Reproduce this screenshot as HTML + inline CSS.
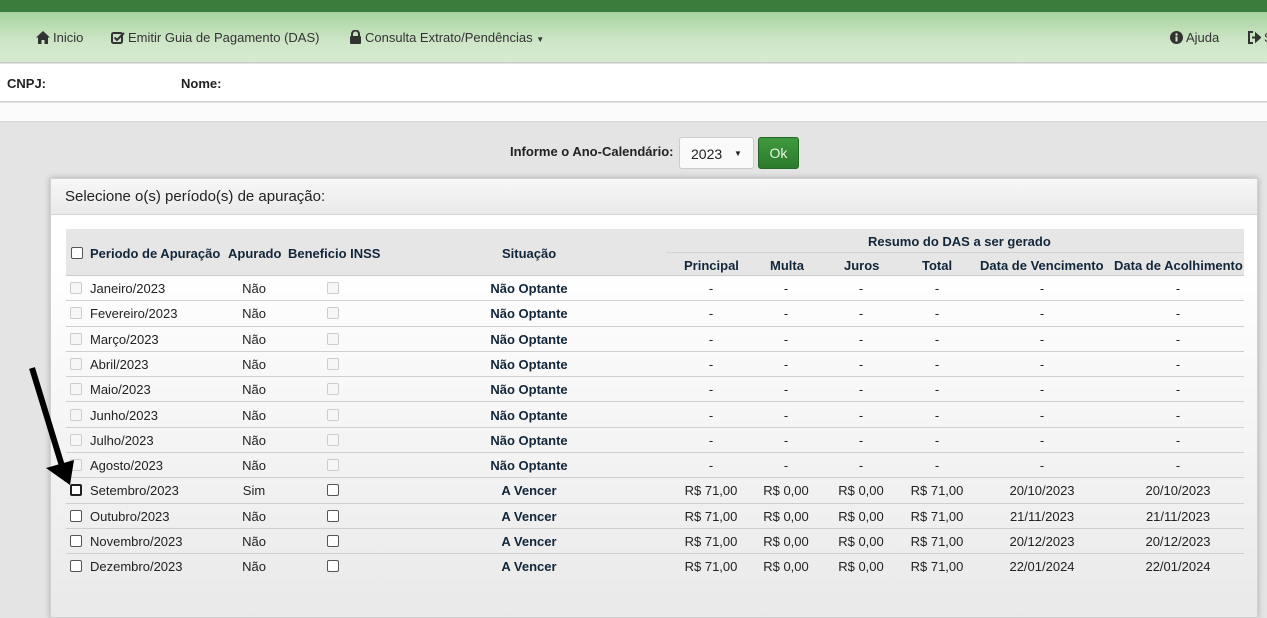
<!DOCTYPE html>
<html><head><meta charset="utf-8"><style>
*{margin:0;padding:0;box-sizing:border-box}
body{width:1267px;height:616px;overflow:hidden;background:#e4e4e4;font-family:"Liberation Sans",sans-serif;font-size:13px;color:#222;position:relative}
.abs{position:absolute}
#top{left:0;top:0;width:1267px;height:12px;background:#3b7b3b}
#nav{left:0;top:12px;width:1267px;height:51px;background:linear-gradient(#a8d4a0,#cfe6c8 60%,#d6ead0);border-bottom:1px solid #c8c8c8}
.ni{position:absolute;top:18px;font-size:13px;color:#333;white-space:nowrap}
.ni svg{vertical-align:-2px;margin-right:3px}
#info{left:0;top:64px;width:1267px;height:38px;background:#fff;border-bottom:1px solid #ccc}
#info2{left:0;top:103px;width:1267px;height:19px;background:#fbfbfb;border-bottom:1px solid #d8d8d8}
#panel{left:50px;top:178px;width:1208px;height:440px;background:linear-gradient(#fff 20%,#f4f4f4 60%,#e9e9e9);box-shadow:0 0 6px rgba(0,0,0,.25);border:1px solid #d0d0d0}
#ph{left:0;top:0;width:1206px;height:36px;background:linear-gradient(#f7f7f7,#e9e9e9);border-bottom:1px solid #d5d5d5;font-size:15px;padding:9px 14px;color:#222}
#th{left:66px;top:229px;width:1178px;height:47px;background:#e6e6e6;border-bottom:1px solid #ccc}
.h{position:absolute;font-weight:bold;color:#12263a;font-size:13px;white-space:nowrap}
.row{position:absolute;left:66px;width:1178px;height:25.3px;border-bottom:1px solid #cfcfcf}
.c{position:absolute;top:5px;white-space:nowrap;transform:translateX(-50%)}
.cb{position:absolute;width:12px;height:12px;border:1px solid #ccc;border-radius:2px;background:#f6f6f6}
.cb.on{border-color:#555;background:#fff}
.s{font-weight:bold;color:#12263a}
</style></head><body>
<div id="top" class="abs"></div>
<div id="nav" class="abs">
<span class="ni" style="left:36px"><svg width="14" height="13" viewBox="0 0 14 13"><path d="M7 0L0 6.5h2V13h3.5V9h3v4H12V6.5h2z" fill="#333"/></svg>Inicio</span>
<span class="ni" style="left:111px"><svg width="14" height="13" viewBox="0 0 14 13"><rect x="1" y="2" width="10" height="10" rx="1.5" fill="none" stroke="#333" stroke-width="2"/><path d="M3.5 6.5l2.5 2.5 7-7" fill="none" stroke="#333" stroke-width="2"/></svg>Emitir Guia de Pagamento (DAS)</span>
<span class="ni" style="left:349px"><svg width="13" height="14" viewBox="0 0 13 14"><path d="M3 6V4a3.5 3.5 0 017 0v2" fill="none" stroke="#333" stroke-width="2"/><rect x="1" y="6" width="11" height="8" rx="1" fill="#333"/></svg>Consulta Extrato/Pendências <span style="font-size:8px">&#9660;</span></span>
<span class="ni" style="left:1170px"><svg width="13" height="13" viewBox="0 0 13 13"><circle cx="6.5" cy="6.5" r="6.5" fill="#333"/><rect x="5.5" y="5.5" width="2" height="5" fill="#d2e8cc"/><circle cx="6.5" cy="3.5" r="1.2" fill="#d2e8cc"/></svg>Ajuda</span>
<span class="ni" style="left:1247px"><svg width="14" height="13" viewBox="0 0 14 13"><path d="M6 1H2v11h4" fill="none" stroke="#333" stroke-width="2"/><path d="M5 6.5h5M9 3l4 3.5L9 10z" fill="#333" stroke="#333" stroke-width="2"/></svg>S</span>
</div>
<div id="info" class="abs"><b class="abs" style="left:7px;top:12px">CNPJ:</b><b class="abs" style="left:181px;top:12px">Nome:</b></div>
<div id="info2" class="abs"></div>
<b class="abs" style="left:510px;top:144px;font-size:13px">Informe o Ano-Calendário:</b>
<div class="abs" style="left:679px;top:137px;width:75px;height:32px;background:#fafafa;border:1px solid #ccc;border-radius:3px;font-size:14px;padding:8px 11px;white-space:nowrap">2023<span style="font-size:8px;position:absolute;left:54px;top:11px">&#9660;</span></div>
<div class="abs" style="left:758px;top:137px;width:41px;height:32px;background:linear-gradient(#3f9a3f,#2c7a2c);border:1px solid #236b23;border-radius:3px;color:#e8f5e8;font-size:14px;text-align:center;line-height:30px">Ok</div>
<div id="panel" class="abs"><div id="ph" class="abs">Selecione o(s) período(s) de apuração:</div></div>
<div id="th" class="abs">
<div class="cb on" style="left:5px;top:18px"></div>
<span class="h" style="left:24px;top:17px">Periodo de Apuração</span>
<span class="h" style="left:162px;top:17px">Apurado</span>
<span class="h" style="left:222px;top:17px">Beneficio INSS</span>
<span class="h" style="left:436px;top:17px">Situação</span>
<span class="h" style="left:802px;top:5px">Resumo do DAS a ser gerado</span>
<div class="abs" style="left:600px;top:23px;width:578px;border-top:1px solid #d4d4d4"></div>
<span class="h" style="left:618px;top:29px">Principal</span>
<span class="h" style="left:704px;top:29px">Multa</span>
<span class="h" style="left:778px;top:29px">Juros</span>
<span class="h" style="left:856px;top:29px">Total</span>
<span class="h" style="left:914px;top:29px">Data de Vencimento</span>
<span class="h" style="left:1048px;top:29px">Data de Acolhimento</span>
</div>
<div id="rows"></div>
<svg class="abs" style="left:0;top:0" width="1267" height="616"><line x1="32" y1="368" x2="62" y2="466" stroke="#000" stroke-width="6"/><polygon points="46,468 74,460 70,485" fill="#000"/></svg>
<script>
var m=["Janeiro","Fevereiro","Março","Abril","Maio","Junho","Julho","Agosto","Setembro","Outubro","Novembro","Dezembro"];
var d=["20/10/2023","21/11/2023","20/12/2023","22/01/2024"];
var h="";
for(var i=0;i<12;i++){var t=276+i*25.3,on=i>=8;
h+='<div class="row" style="top:'+t+'px'+(i==11?';border-bottom:none':'')+'">';
h+='<div class="cb'+(on?' on':'')+'" style="left:4px;top:6px'+(i==8?';border:2px solid #222':'')+'"></div>';
h+='<span style="position:absolute;left:24px;top:5px">'+m[i]+'/2023</span>';
h+='<span class="c" style="left:188px">'+(i==8?'Sim':'Não')+'</span>';
h+='<div class="cb'+(on?' on':'')+'" style="left:261px;top:6px"></div>';
h+='<span class="c s" style="left:463px">'+(on?'A Vencer':'Não Optante')+'</span>';
var v=on?['R$ 71,00','R$ 0,00','R$ 0,00','R$ 71,00',d[i-8],d[i-8]]:['-','-','-','-','-','-'];
var x=[645,720,795,871,976,1112];
for(var j=0;j<6;j++)h+='<span class="c" style="left:'+x[j]+'px">'+v[j]+'</span>';
h+='</div>';}
document.getElementById('rows').innerHTML=h;
</script>
</body></html>
